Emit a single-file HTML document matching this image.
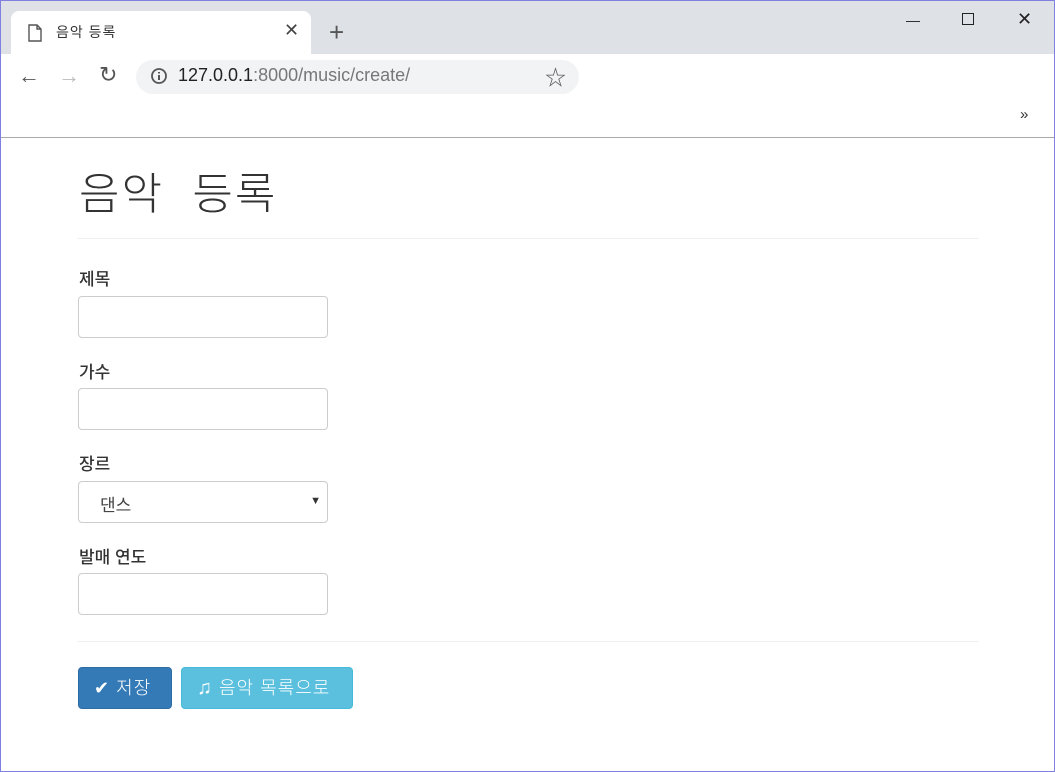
<!DOCTYPE html>
<html><head><meta charset="utf-8"><style>
*{box-sizing:border-box}
body{margin:0;width:1055px;height:772px;overflow:hidden;font-family:"Liberation Sans","Noto Sans CJK KR",sans-serif;background:#fff;position:relative;}
.frame{position:absolute;left:0;top:0;width:1055px;height:772px;border:1px solid #8080e0;pointer-events:none;z-index:9}
.top{position:absolute;left:0;top:0;width:1055px;height:54px;background:#dee1e6}
.tab{position:absolute;left:11px;top:11px;width:300px;height:43px;background:#fff;border-radius:8px 8px 0 0}
.bar{position:absolute;left:0;top:54px;width:1055px;height:84px;background:#fff;border-bottom:1px solid #aaa}
.url{position:absolute;left:136px;top:60px;width:443px;height:34px;background:#f1f3f4;border-radius:17px}
.a{position:absolute;font-size:13px;color:#333}
.label{position:absolute;left:79px;font-size:17px;color:#333;font-weight:500}
.inp{position:absolute;left:78px;width:250px;height:42px;border:1px solid #ccc;border-radius:4px;background:#fff}
.hr{position:absolute;left:78px;width:900px;height:1px;background:#eee}
.btn{position:absolute;top:667px;height:42px;border-radius:4px;color:#fff;font-size:18px;line-height:40px;letter-spacing:1px;font-weight:300}
</style></head><body>
<div class="top"></div>
<div class="tab"></div>
<svg style="position:absolute;left:28px;top:24px" width="14" height="18"><path d="M1 1h8l4 4v12H1z M9 1v4h4" fill="none" stroke="#555" stroke-width="1.4"/></svg>
<div class="a" style="left:56px;top:22px;font-size:14px;letter-spacing:1px">음악 등록</div>
<div class="a" style="left:284px;top:20px;font-size:18px;color:#444">✕</div>
<div class="a" style="left:329px;top:17px;font-size:26px;color:#555">+</div>
<div class="a" style="left:906px;top:12px;font-size:14px;color:#222">—</div>
<div style="position:absolute;left:962px;top:13px;width:12px;height:12px;border:1px solid #222"></div>
<div class="a" style="left:1017px;top:9px;font-size:18px;color:#222">✕</div>
<div class="bar"></div>
<div class="url"></div>
<div class="a" style="left:18px;top:63px;font-size:22px;color:#555">←</div>
<div class="a" style="left:58px;top:63px;font-size:22px;color:#bbb">→</div>
<div class="a" style="left:99px;top:62px;font-size:22px;color:#555">↻</div>
<svg style="position:absolute;left:150px;top:67px" width="18" height="18"><circle cx="9" cy="9" r="7" fill="none" stroke="#555" stroke-width="1.8"/><path d="M9 8v5M9 5v1.5" stroke="#555" stroke-width="2"/></svg>
<div class="a" style="left:178px;top:65px;font-size:18px;color:#222">127.0.0.1<span style="color:#777">:8000/music/create/</span></div>
<div class="a" style="left:545px;top:62px;font-size:21px;color:#555">☆</div>
<div class="a" style="left:1020px;top:106px;font-size:15px">»</div>
<div style="position:absolute;left:79px;top:158px;font-size:44px;color:#333;letter-spacing:2px;font-weight:300">음악&nbsp; 등록</div>
<div class="hr" style="top:238px"></div>
<div class="label" style="top:265px">제목</div>
<div class="inp" style="top:296px"></div>
<div class="label" style="top:358px">가수</div>
<div class="inp" style="top:388px"></div>
<div class="label" style="top:450px">장르</div>
<div class="inp" style="top:481px"><span style="position:absolute;left:21px;top:9px;font-size:17px;color:#444">댄스</span><span style="position:absolute;right:6px;top:13px;font-size:11px;color:#333">▼</span></div>
<div class="label" style="top:543px">발매 연도</div>
<div class="inp" style="top:573px"></div>
<div class="hr" style="top:641px"></div>
<div class="btn" style="left:78px;width:94px;background:#337ab7;border:1px solid #2e6da4;padding-left:15px">✔&nbsp;저장</div>
<div class="btn" style="left:181px;width:172px;background:#5bc0de;border:1px solid #46b8da;padding-left:15px"><span style="font-size:20px">♫</span>&nbsp;음악 목록으로</div>
<div class="frame"></div>
</body></html>
